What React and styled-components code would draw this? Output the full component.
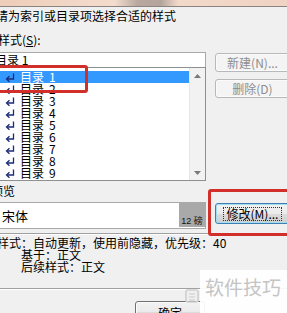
import React from 'react'
import styled, { createGlobalStyle } from 'styled-components'

const GlobalStyle = createGlobalStyle`
    html, body {
        margin: 0;
        padding: 0;
        background: #f0f0f0;
        overflow: hidden;
    }
    body {
        font-family: "Noto Sans CJK SC", "Liberation Sans", sans-serif;
        font-size: 12px;
        color: #000;
    }
`

const Page = styled.div`
    position: relative;
    width: 287px;
    height: 313px;
    overflow: hidden;
`

const TitleStrip = styled.div`
    height: 6px;
    border-bottom: 1px solid #8c8480;
    background: linear-gradient(90deg, #eecdb9 0%, #f3dccd 40%, #b9a8a0 48%, #b3a49c 56%, #f2d9ca 62%, #f0d3c2 100%);
`

const Body = styled.div`
    display: flex;
    flex-direction: column;
    margin-left: -3px;
`

const Line = styled.div`
    height: ${p => p.$h || 14}px;
    line-height: ${p => p.$h || 14}px;
    margin-top: ${p => p.$mt || 0}px;
    margin-left: ${p => p.$ml || 0}px;
    white-space: nowrap;
`

const Columns = styled.div`
    display: grid;
    grid-template-columns: 212px 1fr;
    column-gap: 9px;
    margin-left: -3px;
    margin-top: ${p => p.$mt || 0}px;
`

const StyleInput = styled.div`
    height: 14px;
    line-height: 14px;
    background: #fff;
    border: 1px solid #a9a9a9;
    border-bottom: none;
    white-space: nowrap;
`

const ListBox = styled.div`
    height: 112px;
    border: 1px solid #8e8f8f;
    background: #fff;
    display: grid;
    grid-template-columns: 1fr 16px;
`

const Rows = styled.div`
    padding-top: 3px;
    display: flex;
    flex-direction: column;
`

const Row = styled.div`
    height: 12px;
    line-height: 12px;
    display: flex;
    align-items: center;
    gap: 5px;
    padding-left: 10px;
    white-space: nowrap;
    background: ${p => p.$selected ? '#3399ff' : 'transparent'};
    color: ${p => p.$selected ? '#fff' : '#000'};
`

const RowNum = styled.span`
    margin-left: 5px;
`

const ScrollBar = styled.div`
    background: #f2f2f2;
    border-left: 1px solid #e6e6e6;
    display: flex;
    flex-direction: column;
    justify-content: space-between;
    align-items: center;
    padding: 6px 0 5px;
`

const SideButtons = styled.div`
    display: flex;
    flex-direction: column;
    gap: 7px;
    padding-top: 1px;
`

const Button = styled.div`
    width: ${p => p.$w || 75}px;
    height: ${p => p.$h || 19}px;
    box-sizing: border-box;
    border-radius: 3px;
    display: flex;
    align-items: center;
    justify-content: center;
    white-space: nowrap;
    border: 1px solid ${p => p.$disabled ? '#b5b9bc' : p.$focused ? '#3c7fb1' : '#707070'};
    background: ${p => p.$disabled
        ? '#f4f4f4'
        : 'linear-gradient(#f2f2f2 0%, #ebebeb 50%, #dddddd 51%, #cfcfcf 100%)'};
    color: ${p => p.$disabled ? '#8d8d8d' : '#000'};
    box-shadow: ${p => p.$focused ? 'inset 0 0 0 1px #a6dcf3' : 'inset 0 0 0 1px #fbfbfb'};
`

const FocusRect = styled.span`
    border: 1px dotted #333;
    padding: 0 3px;
    line-height: 12px;
`

const PreviewBox = styled.div`
    border: 1px solid #a9a9a9;
    background: #fff;
    display: grid;
    grid-template-columns: 1fr 26px;
    height: 25px;
`

const PreviewText = styled.div`
    font-size: 13px;
    line-height: 25px;
    padding-left: 7px;
`

const SizeBadge = styled.div`
    background: #a9a9a9;
    margin-bottom: 1px;
    display: flex;
    align-items: flex-end;
    justify-content: center;
    font-size: 9px;
    line-height: 10px;
    padding-bottom: 1px;
    color: #111;
    font-family: "Liberation Sans", "Noto Sans CJK SC", sans-serif;
`

const ModifyCell = styled.div`
    padding-top: 1px;
`

const Divider = styled.div`
    height: 0;
    border-top: 1px solid #a0a0a0;
    border-bottom: 1px solid #fff;
    margin-top: ${p => p.$mt || 0}px;
    margin-left: -4px;
    width: 300px;
`

const Footer = styled.div`
    display: flex;
    padding-left: 138px;
    margin-top: 11px;
`

const Highlight = styled.div`
    position: absolute;
    left: ${p => p.$x}px;
    top: ${p => p.$y}px;
    width: ${p => p.$w}px;
    height: ${p => p.$h}px;
    border: 3px solid #d22f2a;
    border-radius: 3px;
    box-sizing: border-box;
    pointer-events: none;
`

const Watermark = styled.div`
    position: absolute;
    left: 185px;
    top: 270px;
    right: 0;
    bottom: 0;
    display: flex;
    align-items: flex-start;
`

const WatermarkLogo = styled.div`
    margin-top: 19px;
    width: 15px;
`

const WatermarkPanel = styled.div`
    flex: 1;
    align-self: stretch;
    background: rgba(255, 255, 255, 0.93);
    color: #c4c4c4;
    font-size: 19px;
    line-height: 20px;
    padding: 7px 0 0 5px;
    white-space: nowrap;
`

const ReturnArrow = ({ color = '#1b2a78' }) => (
    <svg width="10" height="9" viewBox="0 0 10 9">
        <path d="M8.5 0.5 V6 H2" fill="none" stroke={color} strokeWidth="1.3" />
        <path d="M4.5 3.2 L1.5 6 L4.5 8.8" fill="none" stroke={color} strokeWidth="1.3" />
    </svg>
)

const ScrollArrow = ({ up }) => (
    <svg width="7" height="4" viewBox="0 0 7 4">
        <path d={up ? 'M0 4 L3.5 0 L7 4 Z' : 'M0 0 L3.5 4 L7 0 Z'} fill="#7a7a7a" />
    </svg>
)

const LogoMark = () => (
    <svg width="14" height="14" viewBox="0 0 14 14">
        <rect x="1" y="1" width="12" height="12" rx="2" fill="none" stroke="#cfcfcf" strokeWidth="1.6" />
        <path d="M4 5 H10 M4 8 H10 M4 11 H10" stroke="#d6d6d6" strokeWidth="1.4" />
    </svg>
)

const levels = [1, 2, 3, 4, 5, 6, 7, 8, 9]

export default function App() {
    return (
        <Page>
            <GlobalStyle />
            <TitleStrip />
            <Body>
                <Line $mt={2} $ml={-1}>请为索引或目录项选择合适的样式</Line>
                <Line $mt={10} $ml={1}>样式(<u>S</u>):</Line>

                <Columns $mt={5}>
                    <div>
                        <StyleInput>目录 1</StyleInput>
                        <ListBox>
                            <Rows>
                                {levels.map(n => (
                                    <Row key={n} $selected={n === 1}>
                                        <ReturnArrow />
                                        <span>目录<RowNum>{n}</RowNum></span>
                                    </Row>
                                ))}
                            </Rows>
                            <ScrollBar>
                                <ScrollArrow up />
                                <ScrollArrow />
                            </ScrollBar>
                        </ListBox>
                    </div>
                    <SideButtons>
                        <Button $disabled>新建(N)...</Button>
                        <Button $disabled>删除(D)</Button>
                    </SideButtons>
                </Columns>

                <Line $mt={3} $ml={-6}>预览</Line>

                <Columns $mt={4}>
                    <PreviewBox>
                        <PreviewText>宋体</PreviewText>
                        <SizeBadge>12 磅</SizeBadge>
                    </PreviewBox>
                    <ModifyCell>
                        <Button $focused $h={21}>
                            <FocusRect>修改(M)...</FocusRect>
                        </Button>
                    </ModifyCell>
                </Columns>

                <Divider $mt={4} />
                <Line $h={12} $mt={2}>样式：自动更新，使用前隐藏，优先级：40</Line>
                <Line $h={12} $ml={24}>基于：正文</Line>
                <Line $h={12} $ml={24}>后续样式：正文</Line>
                <Divider $mt={15} />

                <Footer>
                    <Button $w={70} $h={22}>确定</Button>
                </Footer>
            </Body>

            <Highlight $x={-6} $y={65} $w={94} $h={28} />
            <Highlight $x={208} $y={189} $w={90} $h={47} />

            <Watermark>
                <WatermarkLogo><LogoMark /></WatermarkLogo>
                <WatermarkPanel>软件技巧</WatermarkPanel>
            </Watermark>
        </Page>
    )
}
